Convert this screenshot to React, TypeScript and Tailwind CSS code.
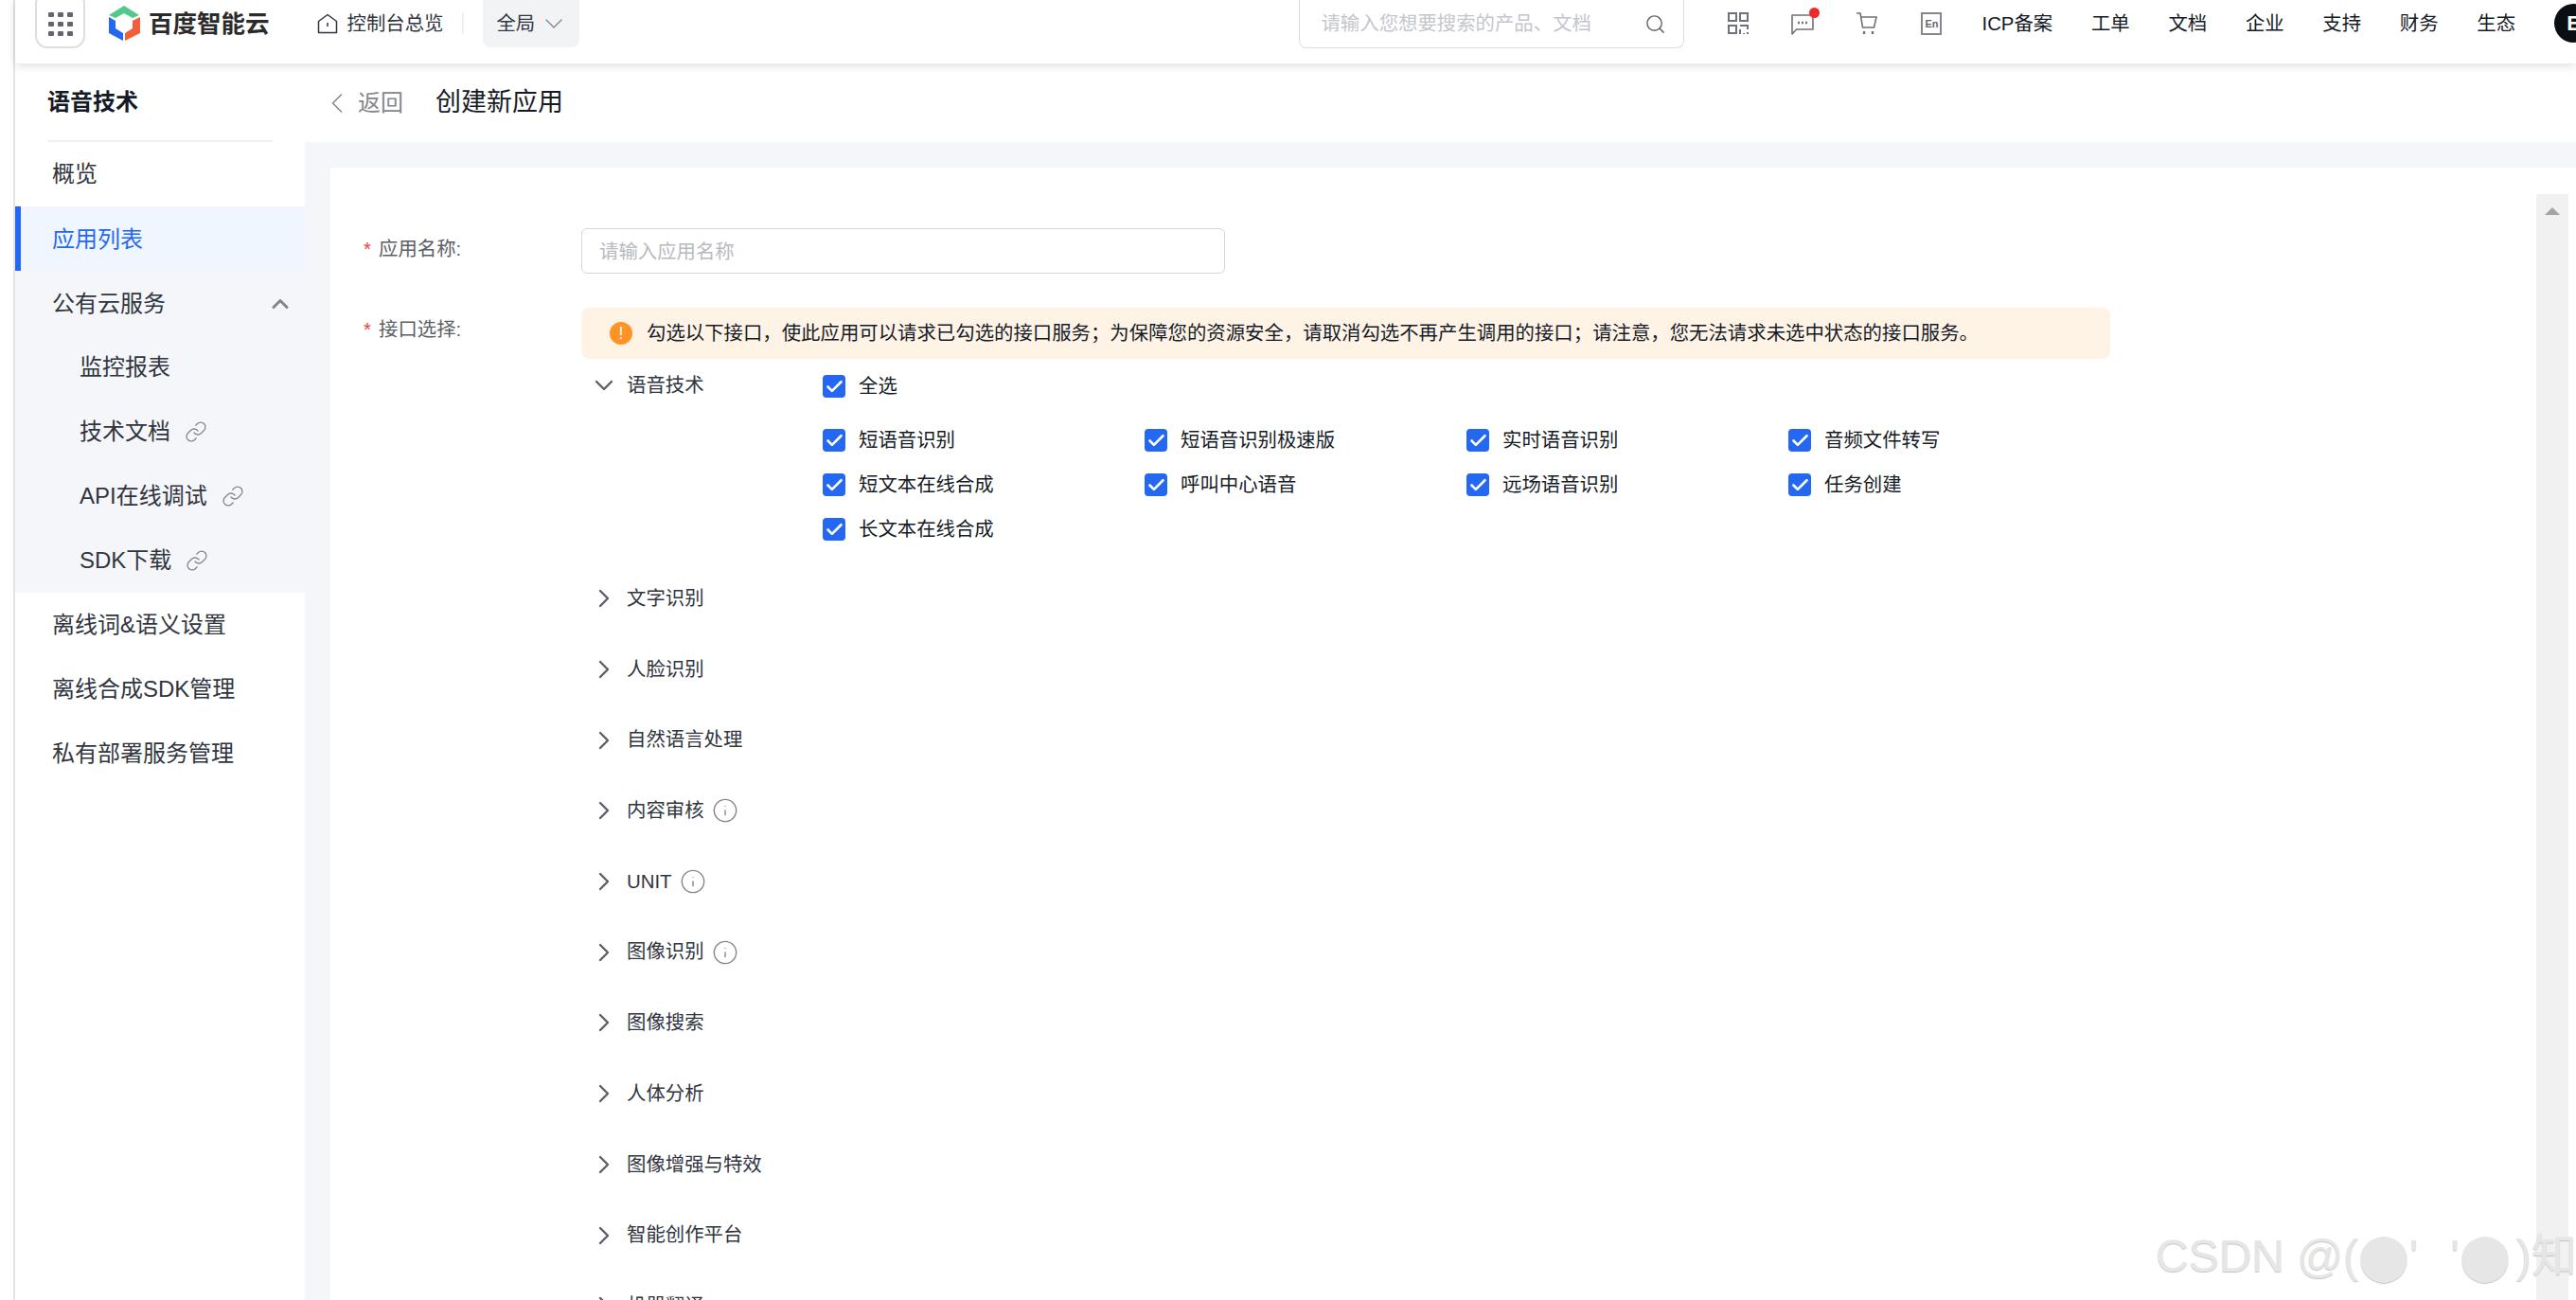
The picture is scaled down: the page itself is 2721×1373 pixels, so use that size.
import { Check, ChevronDown, ChevronRight, ChevronUp, ChevronLeft, Info, Link, Search } from "lucide-react"

const font = { fontFamily: '"Liberation Sans", "Noto Sans CJK SC", sans-serif' }

const menuTop = [{ name: "概览" }]
const subMenu = [
    { name: "监控报表", link: false },
    { name: "技术文档", link: true },
    { name: "API在线调试", link: true },
    { name: "SDK下载", link: true },
]
const menuBottom = ["离线词&语义设置", "离线合成SDK管理", "私有部署服务管理"]
const navItems = [
    { name: "工单" },
    { name: "文档" },
    { name: "企业" },
    { name: "支持" },
    { name: "财务" },
    { name: "生态" },
]
const apis = [
    "短语音识别",
    "短语音识别极速版",
    "实时语音识别",
    "音频文件转写",
    "短文本在线合成",
    "呼叫中心语音",
    "远场语音识别",
    "任务创建",
    "长文本在线合成",
]
const groups = [
    { name: "文字识别", info: false },
    { name: "人脸识别", info: false },
    { name: "自然语言处理", info: false },
    { name: "内容审核", info: true },
    { name: "UNIT", info: true },
    { name: "图像识别", info: true },
    { name: "图像搜索", info: false },
    { name: "人体分析", info: false },
    { name: "图像增强与特效", info: false },
    { name: "智能创作平台", info: false },
    { name: "机器翻译", info: false },
]

function Logo() {
    return (
        <svg width="33" height="37" viewBox="0 0 33 37" className="ml-[25px] mt-[6px] shrink-0">
            <polygon points="16,0 32,10 25,13 16,8 7,13 0,10" fill="#52c98a" />
            <polygon points="0,12 7,16 7,24 15,29 15,37 0,29" fill="#2468f2" />
            <polygon points="33,12 33,29 17,37 17,29 25,24 25,16" fill="#f0603c" />
        </svg>
    )
}

function GridDots() {
    const cells = [0, 1, 2].flatMap((y) => [0, 1, 2].map((x) => ({ x, y })))
    return (
        <svg width="26" height="25" viewBox="0 0 26 25">
            {cells.map((c) => (
                <rect key={`${c.x}-${c.y}`} x={c.x * 10} y={c.y * 10} width="6" height="5" rx="1" fill="#63666d" />
            ))}
        </svg>
    )
}

function HomeIcon() {
    return (
        <svg width="22" height="22" viewBox="0 0 22 22" fill="none" stroke="#303540" strokeWidth="1.5">
            <path d="M11 1.5 20.5 8.5V20.5H1.5V8.5Z" strokeLinejoin="round" />
            <path d="M11 10v4" />
        </svg>
    )
}

function QrIcon() {
    return (
        <svg width="22" height="24" viewBox="0 0 22 24" fill="none" stroke="#6f7278" strokeWidth="2">
            <rect x="1" y="1" width="8" height="8" />
            <rect x="13" y="1" width="8" height="8" />
            <rect x="1" y="14" width="8" height="8" />
            <path d="M13 14h8v4M13 18v5M17 22v1M21 21v2" />
        </svg>
    )
}

function ChatIcon() {
    return (
        <div className="relative h-[24px] w-[24px]">
            <svg width="24" height="24" viewBox="0 0 24 24" fill="none" stroke="#6f7278" strokeWidth="1.6">
                <path d="M1 3h22v15H5.5L1 23Z" strokeLinejoin="round" />
                <path d="M7 11h2M11 11h2M15 11h2" strokeWidth="2.4" />
            </svg>
            <div className="absolute right-[-6px] top-[-5px] h-[11px] w-[11px] rounded-full bg-[#ee2a2a]" />
        </div>
    )
}

function CartIcon() {
    return (
        <svg width="24" height="26" viewBox="0 0 24 26" fill="none" stroke="#6f7278" strokeWidth="1.6">
            <path d="M1 2h4l2.5 15h12L22 6H5.6" />
            <path d="M9 21v3M18 21v3" strokeWidth="2.4" />
        </svg>
    )
}

function CheckBox() {
    return (
        <div className="flex h-[24px] w-[24px] shrink-0 items-center justify-center rounded-[4px] bg-[#2468f2]">
            <Check size={21} color="#fff" strokeWidth={3} />
        </div>
    )
}

function CheckItem({ label }: { label: string }) {
    return (
        <div className="flex h-[24px] items-center gap-[14px]">
            <CheckBox />
            <span className="text-[20.4px] leading-[24px] text-[#151b26]">{label}</span>
        </div>
    )
}

function Sidebar() {
    return (
        <aside className="w-[306px] shrink-0 bg-white text-[24px] leading-[68px] text-[#303540]">
            <div className="mx-[34px] h-[83px] border-b-2 border-[#eeeff2] text-[24px] font-bold leading-[82px] text-[#151b26]">语音技术</div>
            {menuTop.map((item) => (
                <div key={item.name} className="h-[68px] pl-[39px]">{item.name}</div>
            ))}
            <div className="h-[68px] border-l-[6px] border-[#2468f2] bg-[#f0f6ff] pl-[33px] leading-[69px] text-[#2468f2]">应用列表</div>
            <div className="bg-[#f5f6fa]">
                <div className="flex h-[68px] items-center justify-between pl-[39px] pr-[12px] pt-[1px]">
                    公有云服务
                    <ChevronUp size={28} color="#84868c" strokeWidth={2.6} />
                </div>
                {subMenu.map((item) => (
                    <div key={item.name} className="flex h-[68px] items-center gap-[15px] pl-[68px]">
                        {item.name}
                        {item.link && <Link size={24} color="#84868c" strokeWidth={1.3} />}
                    </div>
                ))}
            </div>
            {menuBottom.map((name) => (
                <div key={name} className="h-[68px] pl-[39px]">{name}</div>
            ))}
        </aside>
    )
}

function Header() {
    return (
        <header className="relative z-10 flex h-[67px] shrink-0 items-start bg-white shadow-[0_2px_10px_rgba(0,0,0,0.14)]">
            <div className="ml-[21px] -mt-[9px] flex h-[60px] w-[53px] shrink-0 items-center justify-center rounded-[13px] border-2 border-[#dddee1] pt-[9px]">
                <GridDots />
            </div>
            <Logo />
            <span className="ml-[9px] mt-[9px] shrink-0 text-[25.5px] font-bold leading-[32px] text-[#2b2b2b]">百度智能云</span>
            <div className="ml-[50px] mt-[14px] shrink-0"><HomeIcon /></div>
            <span className="ml-[10px] mt-[12px] shrink-0 text-[20.4px] leading-[26px] text-[#303540]">控制台总览</span>
            <div className="ml-[20px] mt-[13px] h-[23px] w-[2px] shrink-0 bg-[#eeeff2]" />
            <div className="ml-[20px] flex h-[50px] w-[102px] shrink-0 items-center gap-[4px] rounded-b-[8px] bg-[#f2f3f5] pl-[14px] text-[20.4px] text-[#303540]">
                全局
                <ChevronDown size={32} color="#84868c" strokeWidth={1} />
            </div>
            <div className="ml-[760px] flex h-[51px] w-[407px] shrink-0 items-center justify-between rounded-b-[8px] border border-t-0 border-[#dcdde0] pl-[22px] pr-[18px] text-[20.4px] text-[#c4c6cb]">
                请输入您想要搜索的产品、文档
                <Search size={23} color="#63666d" strokeWidth={1.5} className="shrink-0" />
            </div>
            <div className="ml-[23px] mt-[13px] flex h-[24px] w-[68px] shrink-0 items-center justify-center"><QrIcon /></div>
            <div className="mt-[13px] flex h-[24px] w-[68px] shrink-0 items-center justify-center"><ChatIcon /></div>
            <div className="mt-[13px] flex h-[24px] w-[68px] shrink-0 items-center justify-center"><CartIcon /></div>
            <div className="mt-[13px] flex h-[24px] w-[68px] shrink-0 items-center justify-center">
                <div className="flex h-[24px] w-[22px] items-center justify-center border-2 border-[#85878c] text-[11px] font-bold leading-none text-[#63666d]">En</div>
            </div>
            <span className="ml-[19px] mt-[12px] shrink-0 text-[20.4px] leading-[26px] text-[#151b26]">ICP备案</span>
            {navItems.map((item) => (
                <span key={item.name} className="ml-[40.7px] mt-[12px] shrink-0 text-[20.4px] leading-[26px] text-[#151b26]">{item.name}</span>
            ))}
            <div className="ml-[41px] mt-[4px] flex h-[41px] w-[41px] shrink-0 items-center justify-center rounded-full bg-[#0b0f14] text-[22px] font-bold text-white">E</div>
        </header>
    )
}

function Form() {
    return (
        <section className="relative flex-1 overflow-hidden bg-white pt-[64px]">
            <div className="flex">
                <div className="flex w-[265px] shrink-0 pl-[35px] pt-[9px] text-[20.4px] leading-[26px] text-[#5c5f66]">
                    <span className="w-[16px] text-[#f33e3e]">*</span>应用名称:
                </div>
                <div className="flex h-[48px] w-[680px] items-center rounded-[6px] border border-[#d4d6d9] pl-[18px] pt-[2px] text-[20.4px] text-[#b8babf]">请输入应用名称</div>
            </div>
            <div className="mt-[36px] flex">
                <div className="flex w-[265px] shrink-0 pl-[35px] pt-[10px] text-[20.4px] leading-[26px] text-[#5c5f66]">
                    <span className="w-[16px] text-[#f33e3e]">*</span>接口选择:
                </div>
                <div className="min-w-0 flex-1">
                    <div className="flex h-[54px] w-[1615px] items-center gap-[15px] rounded-[8px] bg-[#fff3e6] pl-[30px] text-[20.4px] text-[#151b26]">
                        <div className="flex h-[24px] w-[24px] shrink-0 items-center justify-center rounded-full bg-[#ff9326] text-[18px] leading-none text-white">!</div>
                        勾选以下接口，使此应用可以请求已勾选的接口服务；为保障您的资源安全，请取消勾选不再产生调用的接口；请注意，您无法请求未选中状态的接口服务。
                    </div>
                    <div className="flex h-[216px]">
                        <div className="flex h-[56px] w-[255px] shrink-0 items-center pl-[8px] text-[20.4px] text-[#303540]">
                            <ChevronDown size={32} color="#5c5f66" strokeWidth={1.8} />
                            <span className="ml-[8px]">语音技术</span>
                        </div>
                        <div className="pt-[17px]">
                            <CheckItem label="全选" />
                            <div className="mt-[33px] grid w-[1360px] grid-cols-4 gap-y-[23px]">
                                {apis.map((api) => (
                                    <CheckItem key={api} label={api} />
                                ))}
                            </div>
                        </div>
                    </div>
                    {groups.map((group) => (
                        <div key={group.name} className="flex h-[74.7px] items-center pl-[8px] text-[20.4px] text-[#303540]">
                            <ChevronRight size={32} color="#5c5f66" strokeWidth={1.8} />
                            <span className="ml-[8px]">{group.name}</span>
                            {group.info && <Info size={28} color="#84868c" strokeWidth={1.2} className="ml-[8px]" />}
                        </div>
                    ))}
                </div>
            </div>
            <div className="absolute bottom-0 right-[8px] top-[28px] w-[34px] bg-[#f1f1f1]">
                <div className="mx-auto mt-[14px] h-0 w-0 border-x-[8px] border-b-[8px] border-x-transparent border-b-[#a3a3a3]" />
            </div>
        </section>
    )
}

export default function App() {
    return (
        <div className="flex h-[1373px] w-[2721px] overflow-hidden bg-white" style={font}>
            <div className="w-[16px] shrink-0 border-r-[2px] border-[#e4e4e4] bg-white" />
            <div className="relative flex min-w-0 flex-1 flex-col">
                <Header />
                <div className="flex min-h-0 flex-1">
                    <Sidebar />
                    <main className="flex min-w-0 flex-1 flex-col bg-[#f5f6f9]">
                        <div className="flex h-[83px] shrink-0 items-center bg-white pl-[16px]">
                            <ChevronLeft size={36} color="#84868c" strokeWidth={1} />
                            <span className="ml-[4px] text-[24px] text-[#84868c]">返回</span>
                            <span className="ml-[34px] text-[27px] text-[#151b26]">创建新应用</span>
                        </div>
                        <div className="flex min-h-0 flex-1 pl-[27px] pt-[27px]">
                            <Form />
                        </div>
                    </main>
                </div>
                <div className="absolute left-[2261px] top-[1292px] whitespace-nowrap text-[48px] leading-[70px] text-[#e6e6e6] [text-shadow:0_1px_1px_#c4c4c4]">
                    CSDN @(⬤' <span className="ml-[21px]">'</span>⬤<span className="ml-[6px]">)知</span>
                </div>
            </div>
        </div>
    )
}
